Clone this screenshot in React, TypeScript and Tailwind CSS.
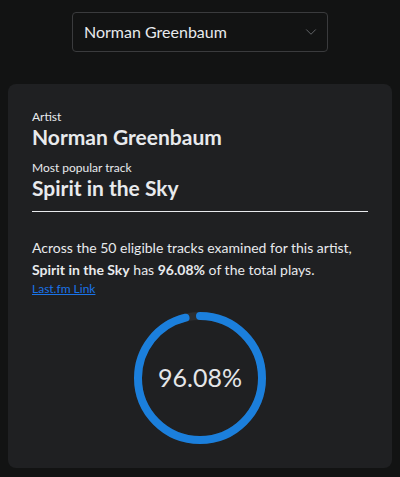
import { ChevronDown } from "lucide-react"

const pct = 96.08
const size = 132
const stroke = 8
const r = (size - stroke) / 2
const circ = 2 * Math.PI * r

function Ring({ value }: { value: number }) {
  return (
    <div className="relative w-[132px] h-[132px]">
      <svg width={size} height={size} viewBox={`0 0 ${size} ${size}`} className="-rotate-90">
        <circle cx={size / 2} cy={size / 2} r={r} fill="none" stroke="#2c2e31" strokeWidth={stroke} />
        <circle
          cx={size / 2}
          cy={size / 2}
          r={r}
          fill="none"
          stroke="#1b7fdc"
          strokeWidth={stroke}
          strokeLinecap="round"
          strokeDasharray={`${(circ * value) / 100} ${circ}`}
        />
      </svg>
      <div className="absolute inset-0 flex items-center justify-center text-[25px] text-[#e4e6e9]">
        {value}%
      </div>
    </div>
  )
}

export default function App() {
  return (
    <div className="min-h-screen bg-[#121313] pt-3 pb-2 px-2 text-[#e8eaed] font-['Lato',sans-serif]">
      <div className="flex justify-center">
        <div className="w-[256px] h-[40px] border border-[#3a3b3d] rounded flex items-center justify-between pl-[11px] pr-[7px] bg-[#121313]">
          <span className="text-[16px]">Norman Greenbaum</span>
          <ChevronDown size={18} strokeWidth={1.2} className="text-[#6b6d70]" />
        </div>
      </div>

      <div className="mt-8 bg-[#1f2022] rounded-lg px-6 pt-[25px] h-[384px]">
        <div className="text-[12px] leading-4">Artist</div>
        <div className="text-[21px] font-bold leading-6">Norman Greenbaum</div>
        <div className="text-[12px] leading-4 mt-[11px]">Most popular track</div>
        <div className="text-[21px] font-bold leading-6 pb-[11px] border-b border-[#e8eaed]">Spirit in the Sky</div>

        <p className="mt-[25px] text-[14px] leading-[22px]">
          Across the 50 eligible tracks examined for this artist,{" "}
          <b>Spirit in the Sky</b> has <b>96.08%</b> of the total plays.
        </p>
        <a href="#" className="block text-[12px] leading-4 text-[#1a73e8] underline">
          Last.fm Link
        </a>

        <div className="flex justify-center mt-[15px]">
          <Ring value={pct} />
        </div>
      </div>
    </div>
  )
}
